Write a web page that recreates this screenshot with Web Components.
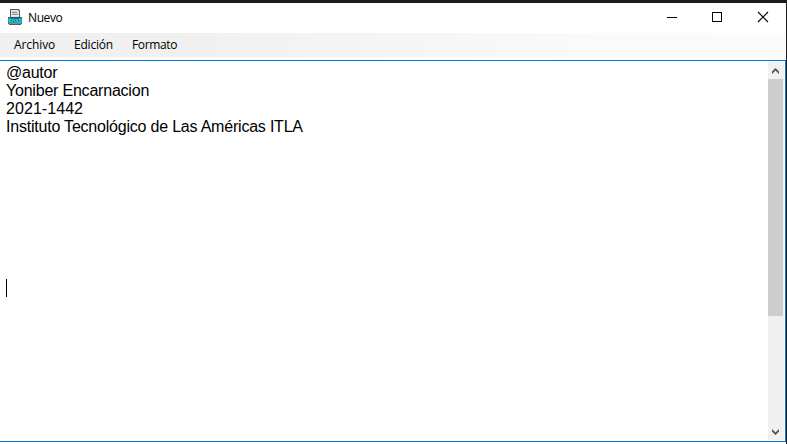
<!DOCTYPE html>
<html lang="es">
<head>
<meta charset="utf-8">
<title>Nuevo</title>
<style>
html,body{margin:0;height:100%;overflow:hidden;background:#fff}
</style>
</head>
<body>
<note-window>
  <title-bar slot="title">Nuevo</title-bar>
  <menu-bar slot="menu">
    <menu-entry style="--w:42px">Archivo</menu-entry>
    <menu-entry style="--w:40px;--track:-.2px">Edición</menu-entry>
    <menu-entry style="--w:46px;--track:-.35px">Formato</menu-entry>
  </menu-bar>
  <text-editor>
    <text-line style="--track:-.25px">@autor</text-line>
    <text-line>Yoniber Encarnacion</text-line>
    <text-line style="--track:.06px">2021-1442</text-line>
    <text-line>Instituto Tecnológico de Las Américas ITLA</text-line>
    <text-caret></text-caret>
    <scroll-bar slot="scroll"></scroll-bar>
  </text-editor>
</note-window>
<script>
const define = (name, html) => customElements.define(name, class extends HTMLElement {
  constructor() {
    super();
    this.attachShadow({ mode: 'open' }).innerHTML = html;
  }
});

define('note-window', `
<style>
:host{box-sizing:border-box;display:flex;flex-direction:column;width:787px;height:444px;border-top:3px solid #1d1b1b;border-right:1px solid #1d1b1b;background:#fff;color:#000;font-family:"Open Sans","Noto Sans",sans-serif}
</style>
<slot name="title"></slot><slot name="menu"></slot><slot></slot>`);

define('title-bar', `
<style>
:host{display:flex;align-items:center;height:30px;flex:none;font-size:12px;line-height:16px}
.icon{flex:none;margin:0 5px 2px 7px}
.name{flex:1;letter-spacing:-.4px}
</style>
<svg class="icon" width="16" height="17" viewBox="0 0 16 17" shape-rendering="crispEdges">
  <path fill="#5a5b5d" d="M3 0h9v1h1v8H2V8h1z"/>
  <path fill="#dedede" d="M4 1h7v1h1v6H4z"/>
  <path fill="#8b8b8b" d="M5 3h5v1H5zM5 5h6v1H5zM11 1h1v1h-1z"/>
  <path fill="#f1f1f1" d="M4 6h8v1H4z"/>
  <path fill="#3a5a62" d="M1 8h14v6H1z"/>
  <path fill="#11a9bd" d="M1 9h3v1h8V9h3v5H1z"/>
  <path fill="#12c4da" d="M2 10h12v3H2z"/>
  <path fill="#20525c" d="M4 11h1v1H4zM6 12h1v1H6zM8 11h1v1H8zM11 11h1v1h-1z"/>
  <path fill="#5d5659" d="M1 14h14v1h-1v1H2v-1H1z"/>
  <path fill="#8f8589" d="M2 14h12v1H2z"/>
</svg>
<span class="name"><slot></slot></span>
<svg width="137" height="30" viewBox="0 0 137 30" fill="none" stroke="#000">
  <path d="M18 14.5h10" shape-rendering="crispEdges"/>
  <path d="M63.5 9.5h9v9h-9z" shape-rendering="crispEdges"/>
  <path d="M109 9l10 10M119 9l-10 10" stroke-width="1.1"/>
</svg>`);

define('menu-bar', `
<style>
:host{box-sizing:border-box;display:flex;align-items:center;gap:18px;flex:none;height:24px;padding-left:14px;margin-bottom:3px;background:linear-gradient(90deg,#f0f0f0 0,#f0f0f0 24%,#fafafa 75%,#fbfbfb);font-size:12px;line-height:16px}
</style><slot></slot>`);

define('menu-entry', `
<style>:host{display:block;width:var(--w);white-space:nowrap;letter-spacing:var(--track,-.1px)}</style><slot></slot>`);

define('text-editor', `
<style>
:host{box-sizing:border-box;display:flex;flex:none;height:382px;border:1px solid #0078d7;border-left:0;font-family:"Liberation Sans",Arial,sans-serif;font-size:16px;line-height:18px}
.text{flex:1;padding:3px 0 0 6px}
</style>
<div class="text"><slot></slot></div><slot name="scroll"></slot>`);

define('text-line', `<style>:host{display:block;height:18px;white-space:pre;letter-spacing:var(--track,-.21px)}</style><slot></slot>`);

define('text-caret', `<style>:host{display:block;width:1px;height:18px;margin-top:143px;background:#000}</style>`);

define('scroll-bar', `
<style>
:host{box-sizing:border-box;display:flex;flex-direction:column;width:16px;height:378px;margin:1px 1px 0 0;background:#f0f0f0}
.thumb{width:15px;height:237px;background:#cdcdcd}
svg{display:block;flex:none}
.space{flex:1}
</style>
<svg width="16" height="17" fill="#505050"><path d="M4 9.5L7.5 6 11 9.5V12L7.5 8.5 4 12z"/></svg>
<div class="thumb"></div><div class="space"></div>
<svg width="16" height="17" fill="#505050"><path d="M4 6L7.5 9.5 11 6v2.5L7.5 12 4 8.5z"/></svg>`);
</script>
</body>
</html>
